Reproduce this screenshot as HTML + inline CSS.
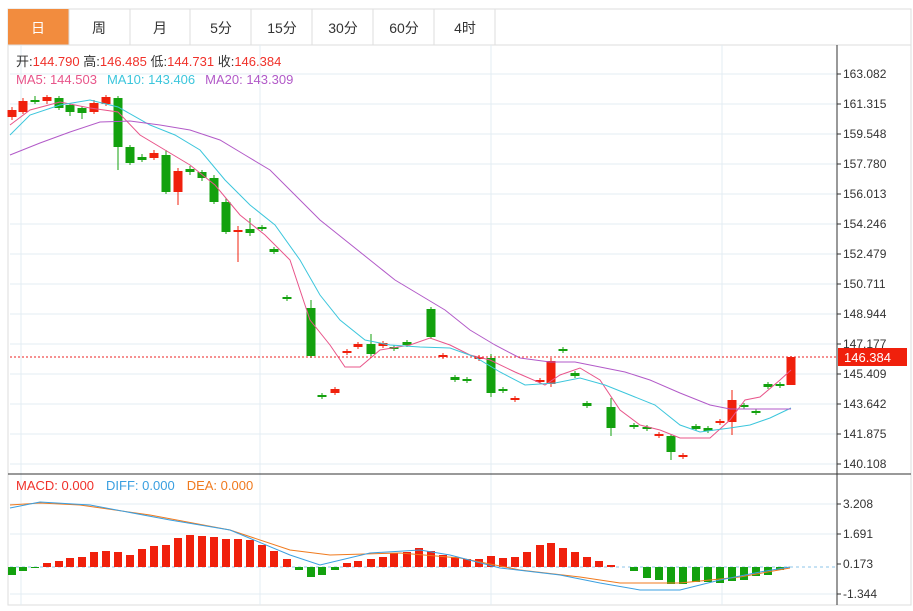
<!DOCTYPE html>
<html><head><meta charset="utf-8"><style>
body{margin:0;background:#fff;font-family:"Liberation Sans","Noto Sans CJK SC",sans-serif;}
svg text{font-family:"Liberation Sans","Noto Sans CJK SC",sans-serif;}
</style></head><body>
<svg id="s" width="913" height="606" xmlns="http://www.w3.org/2000/svg">
<rect x="8" y="9" width="903" height="596" fill="#fff" stroke="#ddd"/>
<rect x="8" y="9" width="61" height="36" fill="#f28c3e"/>
<g stroke="#ddd"><line x1="8" y1="45" x2="911" y2="45"/>
<line x1="69" y1="9" x2="69" y2="45"/><line x1="130" y1="9" x2="130" y2="45"/><line x1="190" y1="9" x2="190" y2="45"/><line x1="251" y1="9" x2="251" y2="45"/><line x1="312" y1="9" x2="312" y2="45"/><line x1="373" y1="9" x2="373" y2="45"/><line x1="434" y1="9" x2="434" y2="45"/><line x1="495" y1="9" x2="495" y2="45"/></g>
<g font-size="14" fill="#333" text-anchor="middle"><text x="38" y="33" fill="#fff">日</text><text x="99" y="33">周</text><text x="160" y="33">月</text><text x="221" y="33">5分</text><text x="282" y="33">15分</text><text x="343" y="33">30分</text><text x="404" y="33">60分</text><text x="465" y="33">4时</text></g>
<g id="grid" stroke="#e3ecf3"></g>
<g font-size="13"><text x="16" y="66" fill="#333">开:<tspan fill="#f0312a">144.790</tspan>  高:<tspan fill="#f0312a">146.485</tspan>  低:<tspan fill="#f0312a">144.731</tspan>  收:<tspan fill="#f0312a">146.384</tspan></text>
<text x="16" y="84"><tspan fill="#e8558a">MA5: 144.503</tspan><tspan fill="#3cc6dc" dx="10">MA10: 143.406</tspan><tspan fill="#b25ac8" dx="10">MA20: 143.309</tspan></text>
<text x="16" y="490"><tspan fill="#f0312a">MACD: 0.000</tspan><tspan fill="#3a9fe0" dx="12">DIFF: 0.000</tspan><tspan fill="#f07a1e" dx="12">DEA: 0.000</tspan></text></g>
<g id="c"></g>
<line x1="8" y1="474" x2="911" y2="474" stroke="#333"/>
<line x1="837" y1="45" x2="837" y2="605" stroke="#333"/>
<g id="ax" font-size="12" fill="#333"></g>
<line x1="10" y1="357" x2="837" y2="357" stroke="#e22" stroke-dasharray="2,2"/>
<rect x="838" y="348" width="69" height="18" fill="#f0200c"/>
<text x="844" y="362" font-size="13" fill="#fff">146.384</text>
</svg>
<script>
var S=document.getElementById('c'),NS='http://www.w3.org/2000/svg';
function el(p,t,a){var e=document.createElementNS(NS,t);for(var k in a)e.setAttribute(k,a[k]);p.appendChild(e);return e;}
var G=document.getElementById('grid'),A=document.getElementById('ax');
[74,104,134,164,194,224,254,284,314,344,374,404,434,464].forEach(function(y){el(G,'line',{x1:10,x2:837,y1:y,y2:y});});
[504,534,594].forEach(function(y){el(G,'line',{x1:10,x2:837,y1:y,y2:y});});
[21,260,491,722].forEach(function(x){el(G,'line',{x1:x,x2:x,y1:45,y2:605});});
el(S,'line',{x1:10,x2:837,y1:567,y2:567,stroke:'#8cc4e8','stroke-dasharray':'3,3'});
var lab=[[74,'163.082'],[104,'161.315'],[134,'159.548'],[164,'157.780'],[194,'156.013'],[224,'154.246'],[254,'152.479'],[284,'150.711'],[314,'148.944'],[344,'147.177'],[374,'145.409'],[404,'143.642'],[434,'141.875'],[464,'140.108'],[504,'3.208'],[534,'1.691'],[564,'0.173'],[594,'-1.344']];
lab.forEach(function(l){el(A,'line',{x1:837,x2:841,y1:l[0],y2:l[0],stroke:'#333'});var t=el(A,'text',{x:843,y:l[0]+4});t.textContent=l[1];});
var R='#f0200c',Gr='#13a10e';
var cs=[[12,'r',110,117,107,120],[23,'r',101,112,98,114],[35,'g',100,102,96,104],[47,'r',97,101,95,104],[59,'g',98,108,96,110],[70,'g',105,112,103,116],[82,'g',108,113,106,119],[94,'r',103,112,100,114],[106,'r',97,104,95,106],[118,'g',98,147,96,170],[130,'g',147,163,145,165],[142,'g',157,160,154,162],[154,'r',153,158,150,160],[166,'g',155,192,150,194],[178,'r',171,192,168,205],[190,'g',169,172,166,175],[202,'g',172,178,170,181],[214,'g',178,202,175,204],[226,'g',202,232,198,234],[238,'r',230,232,226,262],[250,'g',229,233,218,236],[262,'g',227,229,225,231],[274,'g',249,252,247,254],[287,'g',297,299,295,301],[311,'g',308,356,300,358],[322,'g',395,397,393,399],[335,'r',389,393,387,395],[347,'r',351,353,349,355],[358,'r',344,347,342,349],[371,'g',344,354,334,356],[383,'r',343,346,341,348],[394,'g',347,349,345,351],[407,'g',342,345,340,347],[431,'g',309,337,307,339],[443,'r',355,357,353,359],[455,'g',377,380,375,382],[467,'g',379,381,377,383],[479,'r',357,359,355,361],[491,'g',358,393,354,397],[503,'g',389,391,387,393],[515,'r',398,400,396,402],[540,'r',380,382,378,384],[551,'r',361,384,358,387],[563,'g',349,351,347,353],[575,'g',373,376,371,378],[587,'g',403,406,401,408],[611,'g',407,428,398,436],[634,'g',425,427,423,429],[647,'g',427,429,425,431],[659,'r',434,436,432,438],[671,'g',436,452,434,460],[683,'r',455,457,453,459],[696,'g',426,429,424,431],[708,'g',428,431,426,433],[720,'r',421,423,419,425],[732,'r',400,422,390,435],[744,'g',405,407,403,409],[756,'g',411,413,409,415],[768,'g',384,387,382,389],[780,'g',384,386,382,388],[791,'r',357,385,356,385]];
cs.forEach(function(c){var col=c[1]=='r'?R:Gr;el(S,'line',{x1:c[0],x2:c[0],y1:c[4],y2:c[5],stroke:col});el(S,'rect',{x:c[0]-4.5,y:c[2],width:9,height:Math.max(2,c[3]-c[2]),fill:col});});
function pl(pts,col){el(S,'polyline',{points:pts,fill:'none',stroke:col,'stroke-width':1});}
pl('10,125 30,110 60,102 90,108 118,112 140,135 165,150 190,165 215,185 240,215 265,235 290,260 310,320 330,345 345,367 360,367 380,350 410,345 430,338 450,345 470,355 490,360 515,372 545,385 560,375 580,368 600,380 620,410 640,425 660,430 680,438 710,438 730,420 745,400 760,397 780,380 791,370','#e8558a');
pl('10,135 30,115 60,105 90,100 118,107 150,125 175,135 200,150 225,180 250,205 275,225 300,260 320,295 340,320 365,340 390,345 420,347 450,348 475,357 500,372 525,385 555,383 580,378 605,385 630,395 655,405 680,425 700,432 730,428 750,425 770,418 791,408','#3cc6dc');
pl('10,155 40,143 70,132 100,122 130,121 160,125 190,130 220,140 245,155 270,170 295,195 320,220 345,240 370,260 395,280 420,295 445,310 470,330 495,345 520,358 550,362 575,362 600,367 625,372 650,380 680,393 710,405 730,409 760,409 791,409','#b25ac8');
var h=[[12,575],[23,571],[35,568],[47,563],[59,561],[70,558],[82,557],[94,552],[106,551],[118,552],[130,555],[142,549],[154,546],[166,545],[178,538],[190,535],[202,536],[214,537],[226,539],[238,539],[250,540],[262,545],[274,551],[287,559],[299,570],[311,577],[322,575],[335,570],[347,563],[358,561],[371,559],[383,557],[394,553],[407,552],[419,548],[431,551],[443,555],[455,557],[467,559],[479,559],[491,556],[503,558],[515,557],[527,552],[540,545],[551,543],[563,548],[575,552],[587,557],[599,561],[611,565],[634,571],[647,578],[659,580],[671,584],[683,584],[696,582],[708,582],[720,583],[732,581],[744,580],[756,576],[768,575],[780,570]];
h.forEach(function(b){var z=567,y=b[1];el(S,'rect',{x:b[0]-4,y:Math.min(z,y),width:8,height:Math.abs(y-z)||1,fill:y<z?R:Gr});});
pl('10,505 40,503 80,505 150,515 230,530 290,550 330,555 400,553 460,558 520,570 580,577 620,583 680,583 740,577 790,568','#f07a1e');
pl('10,508 40,502 90,505 170,520 230,530 290,555 320,565 370,553 420,550 450,555 500,568 560,575 600,583 640,590 680,590 720,580 760,572 790,567','#3a9fe0');
</script>
</body></html>
